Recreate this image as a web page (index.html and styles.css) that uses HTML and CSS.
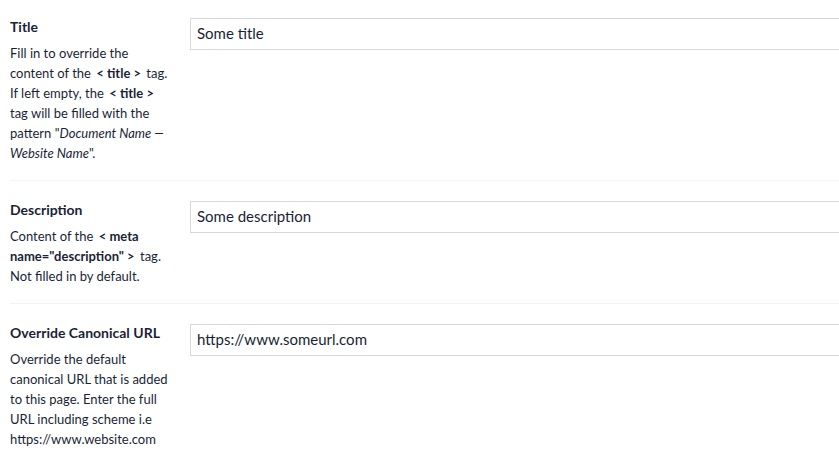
FILE: index.html
```html
<!DOCTYPE html>
<html lang="en">
<head>
  <meta charset="UTF-8" />
  <title>Page properties</title>
  <link rel="stylesheet" href="styles.css">
</head>
<body>
  <div class="properties">
    <div class="property">
      <div class="property-label">
        <label>Title</label>
        <div class="property-description">
          Fill in to override the content of the <span class="code">&lt; title &gt;</span> tag. If left empty, the <span class="code">&lt; title &gt;</span> tag will be filled with the pattern "<em>Document Name — Website Name</em>".
        </div>
      </div>
      <div class="property-editor">
        <input type="text" value="Some title" />
      </div>
    </div>

    <div class="property">
      <div class="property-label">
        <label>Description</label>
        <div class="property-description">
          Content of the <span class="code">&lt; meta name="description" &gt;</span> tag. Not filled in by default.
        </div>
      </div>
      <div class="property-editor">
        <input type="text" value="Some description" />
      </div>
    </div>

    <div class="property">
      <div class="property-label">
        <label>Override Canonical URL</label>
        <div class="property-description">
          Override the default canonical URL that is added to this page. Enter the full URL including scheme i.e https://www.website.com
        </div>
      </div>
      <div class="property-editor">
        <input type="text" value="https://www.someurl.com" />
      </div>
    </div>
  </div>
</body>
</html>
```

FILE: styles.css
```css
html {
  overflow: hidden;
}
body {
  margin: 0;
  font-family: Lato, "Open Sans", sans-serif;
  color: #1a1f36;
  background: #fff;
}
.properties {
  padding-left: 10px;
}
.property {
  display: flex;
  padding: 18px 0 17px;
  border-bottom: 1px solid #f3f3f5;
}
.property:first-child {
  padding-top: 16px;
}
.property-label {
  width: 160px;
  padding: 1px 20px 0 0;
  flex-shrink: 0;
}
.property-label label {
  display: block;
  font-size: 14px;
  font-weight: bold;
  line-height: 20px;
}
.property-description {
  margin-top: 6px;
  font-size: 13px;
  line-height: 20px;
}
.code {
  font-weight: bold;
  padding: 0 2px;
}
.property-editor {
  padding-top: 2px;
}
input {
  box-sizing: border-box;
  width: 660px;
  height: 32px;
  padding: 3px 6px 5px;
  font-family: inherit;
  font-size: 15px;
  color: #1a1f36;
  border: 1px solid #d8d7d9;
  border-radius: 0;
  outline: none;
}
```
